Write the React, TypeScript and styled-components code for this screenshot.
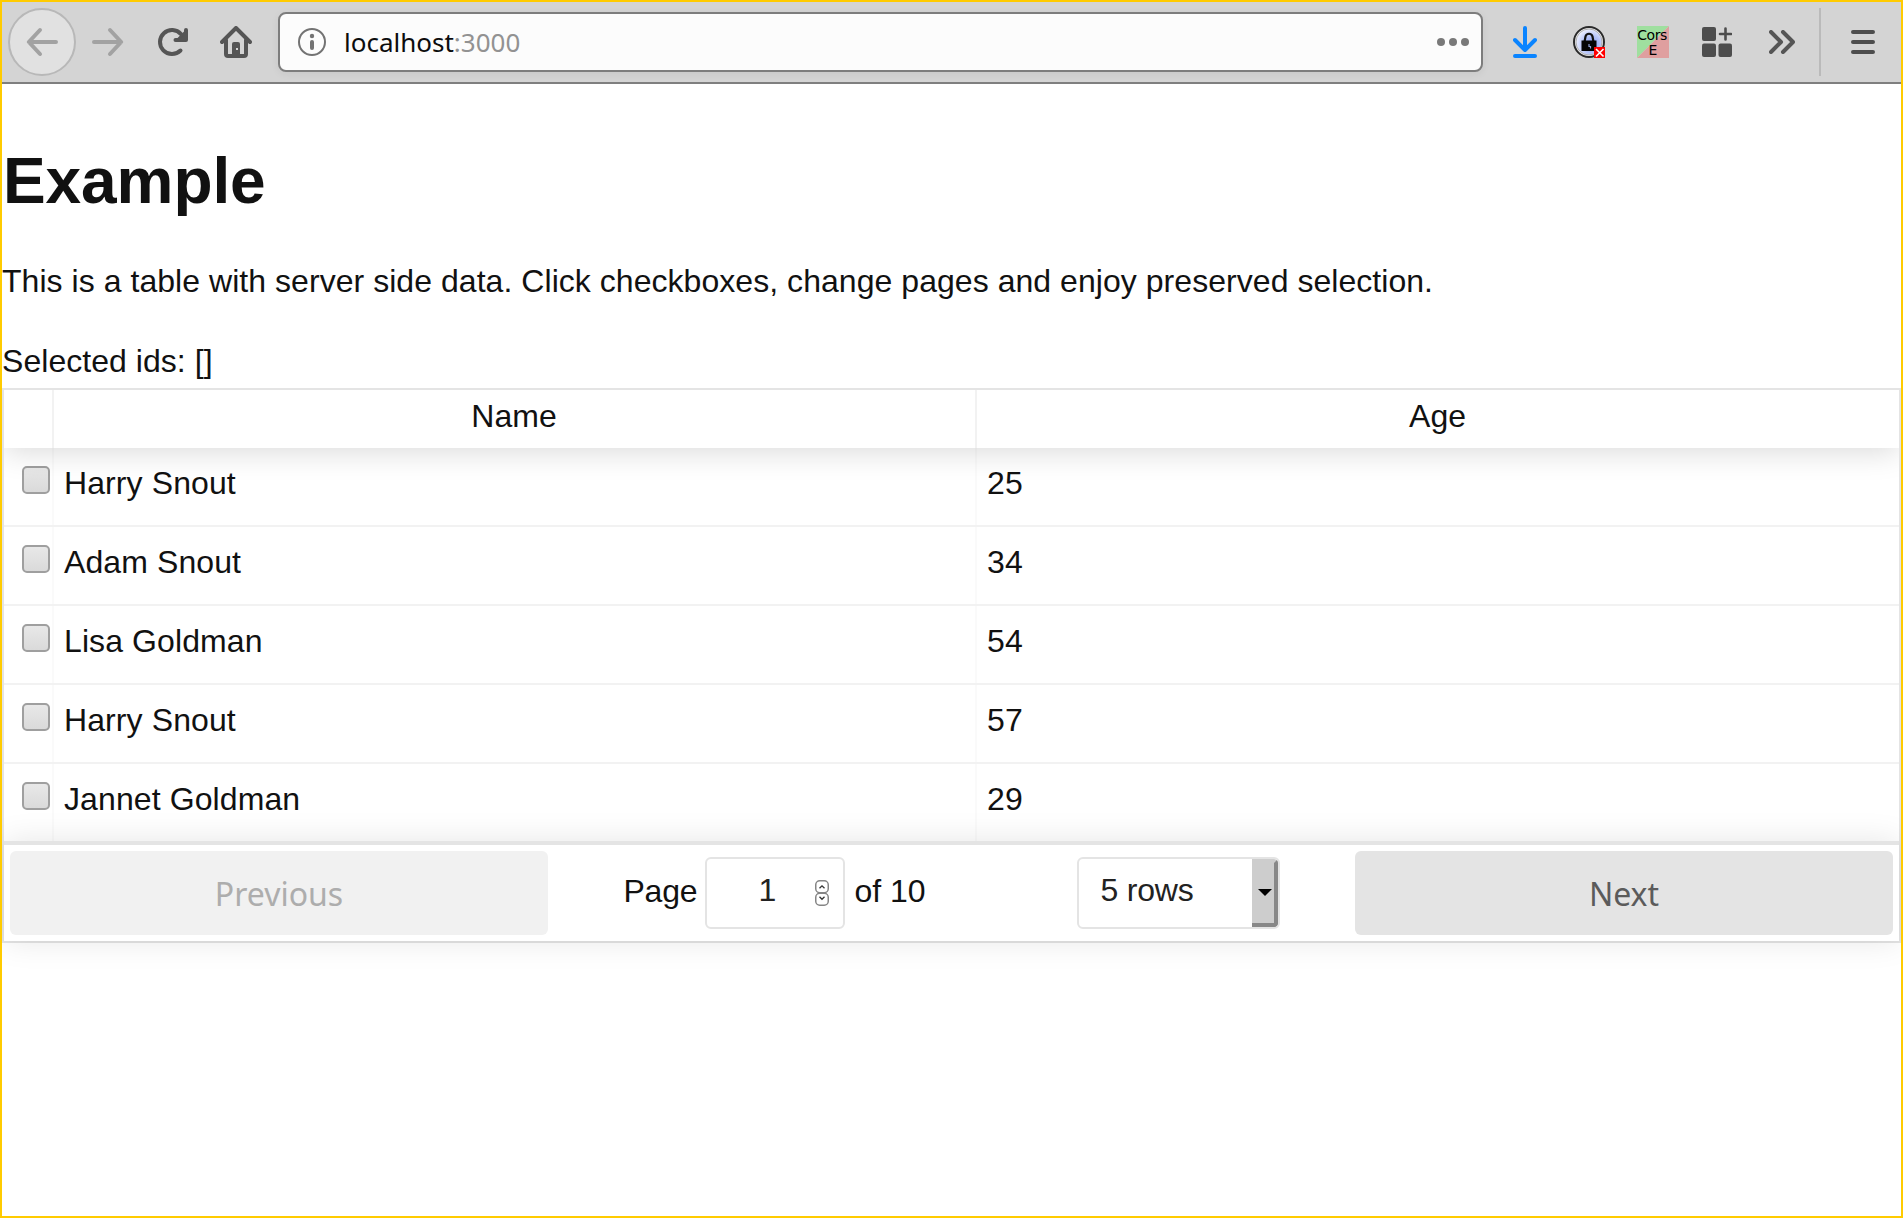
import React, { useState } from 'react';
import styled, { createGlobalStyle } from 'styled-components';

const sans = `"Liberation Sans", Arial, sans-serif`;
const uiSans = `"Noto Sans", "Open Sans", sans-serif`;

const GlobalStyle = createGlobalStyle`
  html, body { margin: 0; padding: 0; background: #fff; }
  *, *::before, *::after { box-sizing: border-box; }
`;

const Frame = styled.div`
  display: flex;
  flex-direction: column;
  height: 1218px;
  border: 2px solid #ffcb00;
  background: #fff;
  color: #111;
  font: 32px/40px ${sans};
  overflow: hidden;
`;

const Toolbar = styled.header`
  display: flex;
  align-items: center;
  flex: none;
  height: 82px;
  padding: 0 4px;
  background: #d4d4d4;
  border-bottom: 2px solid #7f7f7f;
`;

const ToolButton = styled.button<{ $width?: number }>`
  display: flex;
  align-items: center;
  justify-content: center;
  flex: none;
  width: ${(p) => p.$width ?? 64}px;
  height: 68px;
  padding: 0;
  border: none;
  background: transparent;
  svg { display: block; }
`;

const BackButton = styled(ToolButton)`
  width: 68px;
  margin: 0 2px;
  border: 2px solid #b8b8b8;
  border-radius: 50%;
  background: #e1e1e1;
`;

const AddressBar = styled.div`
  display: flex;
  align-items: center;
  flex: none;
  width: 1205px;
  height: 60px;
  margin: 0 14px;
  padding: 0 12px 0 18px;
  border: 2px solid #7d7d7d;
  border-radius: 8px;
  background: #fcfcfc;
  box-shadow: 0 2px 8px rgba(0, 0, 0, 0.06);
`;

const Address = styled.span`
  flex: 1;
  margin-left: 18px;
  font: 26px/40px ${uiSans};
  color: #0c0c0d;
`;

const Port = styled.span`
  color: #929292;
`;

const Divider = styled.div`
  width: 2px;
  height: 68px;
  margin: 0 10px 0 8px;
  background: #bababa;
`;

const Title = styled.h1`
  margin: 57px 0 0;
  padding-left: 1px;
  font: bold 64px/80px ${sans};
  letter-spacing: -0.1px;
`;

const Paragraph = styled.p`
  margin: 40px 0 0;
  line-height: 40px;
  letter-spacing: 0.045px;
`;

const ReactTable = styled.section`
  display: flex;
  flex-direction: column;
  margin-top: 7px;
  border: 2px solid #e4e4e4;
`;

const Grid = styled.div`
  overflow: hidden;
`;

const Columns = styled.div`
  display: grid;
  grid-template-columns: 50px 923px 1fr;
`;

const Head = styled(Columns)`
  position: relative;
  height: 58px;
  box-shadow: 0 4px 30px rgba(0, 0, 0, 0.15);
`;

const HeadCell = styled.div`
  padding: 6px 1px 0 0;
  text-align: center;
  border-right: 2px solid #f2f2f2;
  &:last-child { border-right: 0; }
`;

const Row = styled(Columns)`
  height: 79px;
  border-bottom: 2px solid #f2f2f2;
  letter-spacing: 0.1px;
  &:last-child { height: 77px; border-bottom: 0; }
`;

const Cell = styled.div`
  padding: 15px 10px 0;
  border-right: 2px solid #fafafa;
  &:last-child { border-right: 0; }
`;

const CheckCell = styled(Cell)`
  padding: 18px 0 0 18px;
`;

const Checkbox = styled.input.attrs({ type: 'checkbox' })`
  appearance: none;
  display: block;
  width: 28px;
  height: 28px;
  margin: 0;
  border: 2px solid #9f9f9f;
  border-radius: 5px;
  background: linear-gradient(#e8e8e8, #dadada);
  &:checked { background: #7a9fd0; }
`;

const Pagination = styled.nav`
  position: relative;
  display: grid;
  grid-template-columns: 1fr 1.5fr 1fr;
  height: 100px;
  padding: 6px;
  border-top: 4px solid #e4e4e4;
  box-shadow: 0 0 30px rgba(0, 0, 0, 0.1);
`;

const PageButton = styled.button`
  height: 84px;
  padding: 2px 0 0;
  border: 0;
  border-radius: 6px;
  background: #e4e4e4;
  color: #5b5b5b;
  font: 32px/40px ${uiSans};
  &:disabled { background: #f1f1f1; color: #adadad; }
`;

const Center = styled.div`
  display: flex;
  align-items: center;
  justify-content: space-around;
`;

const PageInfo = styled.div`
  display: flex;
  align-items: center;
  gap: 9px;
  span { margin-top: -4px; }
  span:first-child { margin-right: -1px; letter-spacing: -0.2px; }
`;

const PageJump = styled.div`
  display: flex;
  align-items: center;
  justify-content: flex-end;
  width: 140px;
  height: 72px;
  padding: 0 14px 6px 0;
  border: 2px solid #e4e4e4;
  border-radius: 6px;
  color: #222;
  svg { margin: 6px 0 0 39px; }
`;

const SizeSelect = styled.div`
  display: flex;
  width: 203px;
  height: 72px;
  border: 2px solid #e4e4e4;
  border-radius: 6px;
  overflow: hidden;
  color: #222;
`;

const SizeLabel = styled.span`
  flex: 1;
  padding: 11px 0 0 22px;
  letter-spacing: -0.2px;
`;

const SelectArrow = styled.span`
  display: flex;
  align-items: center;
  justify-content: center;
  width: 26px;
  padding: 0 0 1px 4px;
  border: solid;
  border-width: 4px 4px 4px 0;
  border-color: #cdcdcd #888 #888 #cdcdcd;
  border-radius: 0 4px 4px 0;
  background: #cdcdcd;
  svg { flex: none; }
`;

const stroke = { fill: 'none', strokeLinecap: 'round', strokeLinejoin: 'round' } as const;

const BackIcon = () => (
  <svg width="32" height="32" viewBox="0 0 32 32" {...stroke} stroke="#a2a2a2" strokeWidth="4">
    <path d="M30 16H3M14 4 2.8 16 14 28" />
  </svg>
);
const ForwardIcon = () => (
  <svg width="32" height="32" viewBox="0 0 32 32" {...stroke} stroke="#a2a2a2" strokeWidth="4">
    <path d="M2 16h27M18 4l11.2 12L18 28" />
  </svg>
);
const ReloadIcon = () => (
  <svg width="32" height="32" viewBox="0 0 32 32" {...stroke} stroke="#555" strokeWidth="4">
    <path d="M23.5 24.5A12 12 0 1 1 24 8.1" />
    <path d="M29 4v10H18.500" />
    <path d="M28 6v7h-7z" fill="#555" strokeWidth="2" />
  </svg>
);
const HomeIcon = () => (
  <svg width="32" height="32" viewBox="0 0 32 32" {...stroke} stroke="#555" strokeWidth="4">
    <path d="M2 16 16 2l14 14" />
    <path d="M6 14v14a2 2 0 0 0 2 2h16a2 2 0 0 0 2-2V14" />
    <path d="M12 30V18a2 2 0 0 1 2-2h4a2 2 0 0 1 2 2v12z" fill="#555" stroke="none" />
    <rect x="16" y="22" width="2" height="2" fill="#d4d4d4" stroke="none" />
  </svg>
);
const InfoIcon = () => (
  <svg width="28" height="28" viewBox="0 0 28 28" fill="none">
    <circle cx="14" cy="14" r="13" stroke="#737373" strokeWidth="2" />
    <circle cx="14" cy="8" r="2.2" fill="#737373" />
    <path d="M14 14v6" stroke="#737373" strokeWidth="4" strokeLinecap="round" />
  </svg>
);
const DotsIcon = () => (
  <svg width="32" height="8" viewBox="0 0 32 8" fill="#797979">
    <circle cx="4" cy="4" r="4" />
    <circle cx="16" cy="4" r="4" />
    <circle cx="28" cy="4" r="4" />
  </svg>
);
const DownloadIcon = () => (
  <svg width="24" height="32" viewBox="0 0 24 32" {...stroke} stroke="#0a84ff" strokeWidth="4">
    <path d="M12 2v21M2 14l10 10 10-10M2 30h20" />
  </svg>
);
const LockIcon = () => (
  <svg width="32" height="32" viewBox="0 0 32 32">
    <defs>
      <radialGradient id="lockFill" cx="0.6" cy="0.6" r="0.65">
        <stop offset="0" stopColor="#7f98f0" />
        <stop offset="0.5" stopColor="#b3c2f8" />
        <stop offset="1" stopColor="#f2f4ff" />
      </radialGradient>
    </defs>
    <circle cx="16" cy="16" r="15" fill="#eee" stroke="#2a2a2a" strokeWidth="2" />
    <circle cx="16" cy="16" r="13" fill="url(#lockFill)" stroke="#b0b0b0" strokeWidth="1" />
    <path d="M11.500 16l1-5.500a3.600 3.600 0 0 1 7 0l1 5.500" fill="none" stroke="#111" strokeWidth="2.200" />
    <rect x="8.500" y="14.500" width="15" height="10.500" fill="#050505" />
    <path d="M16 18v2.500h1.500v2" fill="none" stroke="#8fa0d8" strokeWidth="1.200" />
    <rect x="21" y="21" width="11" height="11" fill="#f00" />
    <path d="M23 23l7.500 7.500M30.500 23 23 30.500" stroke="#fff" strokeWidth="1.600" />
  </svg>
);
const CorsIcon = () => (
  <svg width="32" height="32" viewBox="0 0 32 32">
    <path d="M0 0h32L0 32z" fill="#9fdf9f" />
    <path d="M32 0v32H0z" fill="#df9f9f" />
    <g fontFamily="DejaVu Sans, sans-serif" fontSize="14" fill="#000">
      <text x="0.300" y="13.500" textLength="30">Cors</text>
      <text x="11.500" y="29.300">E</text>
    </g>
  </svg>
);
const ExtensionsIcon = () => (
  <svg width="30" height="30" viewBox="0 0 30 30" fill="#4d4d4d">
    <rect width="14" height="14" rx="2" />
    <rect y="16.500" width="14" height="13.500" rx="2" />
    <rect x="16.500" y="16.500" width="13.500" height="13.500" rx="2" />
    <path d="M23.500 1.500v11M18 7h11" stroke="#4d4d4d" strokeWidth="2.600" strokeLinecap="round" />
  </svg>
);
const OverflowIcon = () => (
  <svg width="26" height="24" viewBox="0 0 26 24" {...stroke} stroke="#555" strokeWidth="4">
    <path d="M2 2l10 10L2 22M14 2l10 10-10 10" />
  </svg>
);
const MenuIcon = () => (
  <svg width="24" height="24" viewBox="0 0 24 24" {...stroke} stroke="#4d4d4d" strokeWidth="4">
    <path d="M2 2h20M2 12h20M2 22h20" />
  </svg>
);
const SpinnerIcon = () => (
  <svg width="14" height="26" viewBox="0 0 14 26" fill="none">
    <rect x="0.750" y="0.750" width="12.500" height="12" rx="4" stroke="#858585" strokeWidth="1.500" />
    <rect x="0.750" y="13.250" width="12.500" height="12" rx="4" stroke="#858585" strokeWidth="1.500" />
    <path d="M4.500 8.300 7 5.800l2.500 2.500M4.500 16.800 7 19.300l2.500-2.500" stroke="#333" strokeWidth="1.300" />
  </svg>
);
const CaretIcon = () => (
  <svg width="14" height="7" viewBox="0 0 14 7">
    <path d="M0 0h14L7 7z" fill="#000" />
  </svg>
);

const people = [
  { id: 1, name: 'Harry Snout', age: 25 },
  { id: 2, name: 'Adam Snout', age: 34 },
  { id: 3, name: 'Lisa Goldman', age: 54 },
  { id: 4, name: 'Harry Snout', age: 57 },
  { id: 5, name: 'Jannet Goldman', age: 29 },
];

export default function App() {
  const [selected, setSelected] = useState<number[]>([]);
  const toggle = (id: number) =>
    setSelected((ids) => (ids.includes(id) ? ids.filter((i) => i !== id) : [...ids, id]));

  return (
    <>
      <GlobalStyle />
      <Frame>
        <Toolbar>
          <BackButton><BackIcon /></BackButton>
          <ToolButton $width={60}><ForwardIcon /></ToolButton>
          <ToolButton $width={70}><ReloadIcon /></ToolButton>
          <ToolButton $width={56}><HomeIcon /></ToolButton>
          <AddressBar>
            <InfoIcon />
            <Address>localhost<Port>:3000</Port></Address>
            <DotsIcon />
          </AddressBar>
          <ToolButton $width={56}><DownloadIcon /></ToolButton>
          <ToolButton $width={72}><LockIcon /></ToolButton>
          <ToolButton $width={56}><CorsIcon /></ToolButton>
          <ToolButton $width={72}><ExtensionsIcon /></ToolButton>
          <ToolButton $width={58}><OverflowIcon /></ToolButton>
          <Divider />
          <ToolButton><MenuIcon /></ToolButton>
        </Toolbar>
        <Title>Example</Title>
        <Paragraph>
          This is a table with server side data. Click checkboxes, change pages and enjoy preserved selection.
        </Paragraph>
        <Paragraph>Selected ids: [{selected.join(', ')}]</Paragraph>
        <ReactTable>
          <Grid>
            <Head>
              <HeadCell />
              <HeadCell>Name</HeadCell>
              <HeadCell>Age</HeadCell>
            </Head>
            {people.map((p) => (
              <Row key={p.id}>
                <CheckCell>
                  <Checkbox checked={selected.includes(p.id)} onChange={() => toggle(p.id)} />
                </CheckCell>
                <Cell>{p.name}</Cell>
                <Cell>{p.age}</Cell>
              </Row>
            ))}
          </Grid>
          <Pagination>
            <PageButton disabled>Previous</PageButton>
            <Center>
              <PageInfo>
                <span>Page</span>
                <PageJump>1<SpinnerIcon /></PageJump>
                <span>of 10</span>
              </PageInfo>
              <SizeSelect>
                <SizeLabel>5 rows</SizeLabel>
                <SelectArrow><CaretIcon /></SelectArrow>
              </SizeSelect>
            </Center>
            <PageButton>Next</PageButton>
          </Pagination>
        </ReactTable>
      </Frame>
    </>
  );
}
